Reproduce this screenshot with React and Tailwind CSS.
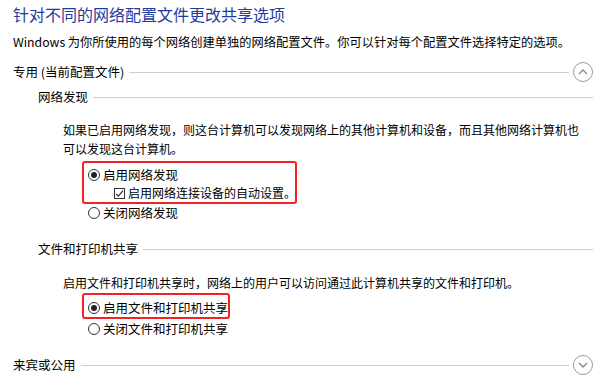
import React from 'react';

const font = { fontFamily: '"Noto Sans CJK SC", "Noto Sans", sans-serif' };

const Radio = ({ checked }) => (
  <span className="w-[12px] h-[12px] rounded-full border border-[#333] flex items-center justify-center bg-white shrink-0">
    {checked && <span className="w-[6px] h-[6px] rounded-full bg-[#222]" />}
  </span>
);

const Check = () => (
  <span className="w-[11px] h-[11px] border border-[#333] flex items-center justify-center bg-white shrink-0">
    <svg width="9" height="9" viewBox="0 0 9 9">
      <path d="M1 4.8 L3.4 7.2 L8 1.6" fill="none" stroke="#222" strokeWidth="1.1" />
    </svg>
  </span>
);

const Toggle = ({ up }) => (
  <span className="w-[20px] h-[20px] rounded-full border-[1.5px] border-[#9c9c9c] flex items-center justify-center shrink-0">
    <svg width="10" height="8" viewBox="0 0 10 8">
      <path d={up ? 'M1 6 L5 2 L9 6' : 'M1 2 L5 6 L9 2'} fill="none" stroke="#8a8a8a" strokeWidth="1.4" />
    </svg>
  </span>
);

const Header = ({ children, toggle, up, className }) => (
  <div className={`flex items-center text-[12.5px] text-black ${className}`}>
    <span className="whitespace-nowrap">{children}</span>
    <span className="flex-1 h-px bg-[#cfcfcf] ml-[5px]" />
    {toggle && (
      <span className="ml-[4px]">
        <Toggle up={up} />
      </span>
    )}
  </div>
);

const Option = ({ checked, children }) => (
  <div className="h-[18px] flex items-center gap-[3px] text-[12.5px] text-black whitespace-nowrap">
    <Radio checked={checked} />
    <span>{children}</span>
  </div>
);

export default function App() {
  return (
    <div className="w-[600px] h-[382px] bg-white overflow-hidden pl-[13px] pr-[7px]" style={font}>
      <div className="h-[28px] flex items-center text-[16px] text-[#1f3c9c] whitespace-nowrap">
        针对不同的网络配置文件更改共享选项
      </div>
      <div className="h-[28px] flex items-center text-[12.25px] text-black whitespace-nowrap">
        Windows 为你所使用的每个网络创建单独的网络配置文件。你可以针对每个配置文件选择特定的选项。
      </div>

      <Header className="h-[32px]" toggle up>专用 (当前配置文件)</Header>
      <Header className="h-[18px] pl-[25px]">网络发现</Header>

      <p className="mt-[14px] pl-[50px] text-[12px] leading-[19px] text-black whitespace-nowrap">
        如果已启用网络发现，则这台计算机可以发现网络上的其他计算机和设备，而且其他网络计算机也
        <br />
        可以发现这台计算机。
      </p>

      <div className="ml-[69px] mt-[3px] w-[215px] h-[43px] border-[2.5px] border-[#f42222] rounded-[3px] pl-[4px] pt-[3px]">
        <Option checked>启用网络发现</Option>
        <div className="h-[18px] flex items-center gap-[3px] pl-[26px] text-[12px] text-black whitespace-nowrap">
          <Check />
          <span>启用网络连接设备的自动设置。</span>
        </div>
      </div>
      <div className="ml-[75px]">
        <Option>关闭网络发现</Option>
      </div>

      <Header className="h-[18px] pl-[25px] mt-[18px]">文件和打印机共享</Header>

      <p className="mt-[15px] pl-[50px] text-[12px] leading-[19px] text-black whitespace-nowrap">
        启用文件和打印机共享时，网络上的用户可以访问通过此计算机共享的文件和打印机。
      </p>

      <div className="ml-[69px] mt-[1px] w-[148px] h-[26px] border-[2.5px] border-[#f42222] rounded-[3px] pl-[4px] pt-[4px]">
        <Option checked>启用文件和打印机共享</Option>
      </div>
      <div className="ml-[75px] mt-[1px]">
        <Option>关闭文件和打印机共享</Option>
      </div>

      <Header className="h-[32px] mt-[11px]" toggle>来宾或公用</Header>
    </div>
  );
}
